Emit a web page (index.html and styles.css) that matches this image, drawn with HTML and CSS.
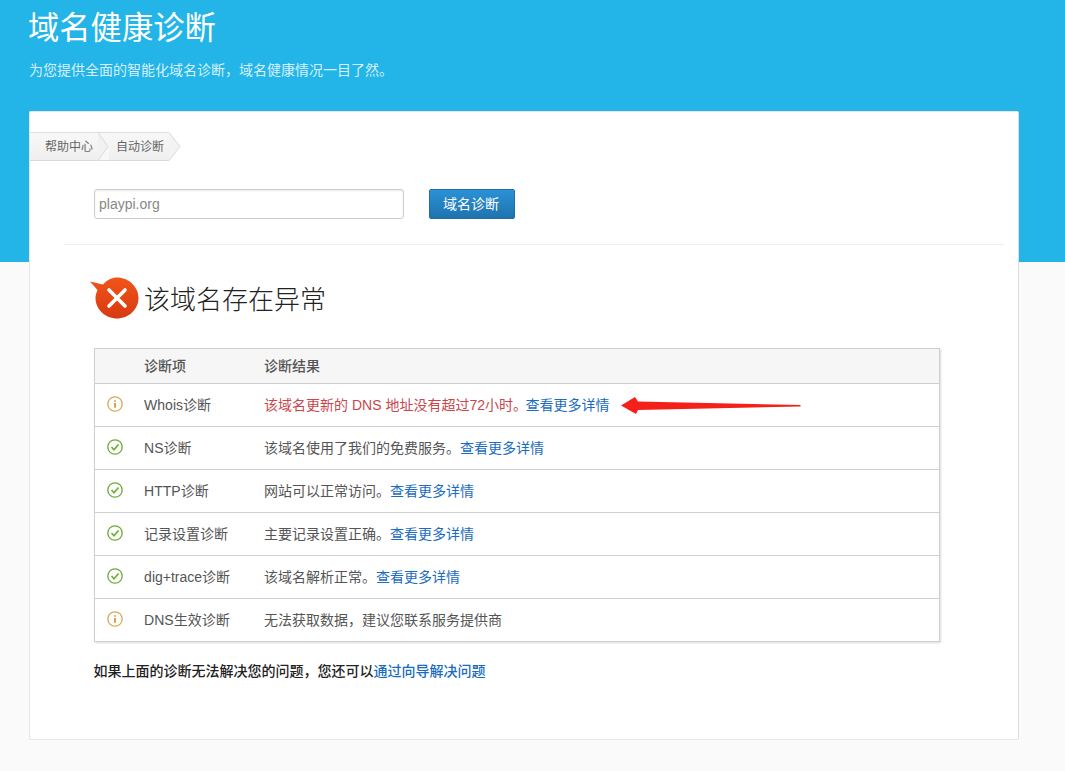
FILE: index.html
```html
<!DOCTYPE html>
<html lang="zh-CN">
<head>
<meta charset="utf-8">
<title>域名健康诊断</title>
<link rel="stylesheet" href="styles.css">
</head>
<body>
<header class="hero">
  <h1 class="hero-title">域名健康诊断</h1>
  <p class="hero-sub">为您提供全面的智能化域名诊断，域名健康情况一目了然。</p>
</header>
<main class="card">
  <nav class="crumbs">
    <span class="crumb crumb-first">帮助中心</span>
    <svg class="crumb-tip" width="11" height="29" viewBox="0 0 11 29"><rect y=".5" width="11" height="28" fill="#f7f7f7"/><path d="M0 .5L10 14.500 0 28.500Z" fill="#f1f1f1"/><path d="M0 .5H11M0 28.500H11" stroke="#dcdcdc"/><path d="M0 .5L10 14.500 0 28.500" fill="none" stroke="#d9d9d9"/></svg>
    <span class="crumb crumb-second">自动诊断</span>
    <svg class="crumb-tip" width="12" height="29" viewBox="0 0 12 29"><path d="M0 .5L11 14.500 0 28.500Z" fill="#f3f3f3"/><path d="M0 .5L11 14.500 0 28.500" fill="none" stroke="#d9d9d9"/></svg>
  </nav>
  <form class="search">
    <input class="search-input" type="text" value="playpi.org">
    <button class="search-btn" type="button">域名诊断</button>
  </form>
  <hr class="divider">
  <div class="status">
    <svg class="status-icon" width="50" height="44" viewBox="0 0 50 44">
      <defs><linearGradient id="sg" x1="0" y1="0" x2="0" y2="1"><stop offset="0" stop-color="#f2551a"/><stop offset="1" stop-color="#d63a10"/></linearGradient></defs>
      <path d="M0 4.500L13 7.500C17 3 22 .5 27 .5 38.500.5 48.500 9.500 48.500 21S38.500 41.500 27 41.500 5.500 32.500 5.500 21C5.500 18 6.500 15.500 7.500 13Z" fill="url(#sg)"/>
      <path d="M19 13L35 29M35 13L19 29" stroke="#fff" stroke-width="3.600" stroke-linecap="round"/>
    </svg>
    <h2 class="status-title">该域名存在异常</h2>
  </div>
  <table class="results">
    <thead>
      <tr><th class="col-icon"></th><th class="col-item">诊断项</th><th>诊断结果</th></tr>
    </thead>
    <tbody>
      <tr>
        <td><svg class="mark mark-info" width="16" height="16" viewBox="0 0 16 16"><circle cx="8" cy="8" r="7.200"/><path d="M8 4.200v1.600M8 7v4.800"/></svg></td>
        <td>Whois诊断</td>
        <td class="cell-arrow"><span class="err">该域名更新的 DNS 地址没有超过72小时。</span><a href="#">查看更多详情</a>
          <svg class="arrow" width="180" height="18" viewBox="0 0 180 18"><path d="M0 8.500L14 0 17 4.500 179.500 8 179.500 9.500 17 13 15 17Z" fill="#f5201a"/></svg></td>
      </tr>
      <tr>
        <td><svg class="mark mark-ok" width="16" height="16" viewBox="0 0 16 16"><circle cx="8" cy="8" r="7.200"/><path d="M4.500 8l2.500 2.800 4.500-5.300"/></svg></td>
        <td>NS诊断</td>
        <td>该域名使用了我们的免费服务。<a href="#">查看更多详情</a></td>
      </tr>
      <tr>
        <td><svg class="mark mark-ok" width="16" height="16" viewBox="0 0 16 16"><circle cx="8" cy="8" r="7.200"/><path d="M4.500 8l2.500 2.800 4.500-5.300"/></svg></td>
        <td>HTTP诊断</td>
        <td>网站可以正常访问。<a href="#">查看更多详情</a></td>
      </tr>
      <tr>
        <td><svg class="mark mark-ok" width="16" height="16" viewBox="0 0 16 16"><circle cx="8" cy="8" r="7.200"/><path d="M4.500 8l2.500 2.800 4.500-5.300"/></svg></td>
        <td>记录设置诊断</td>
        <td>主要记录设置正确。<a href="#">查看更多详情</a></td>
      </tr>
      <tr>
        <td><svg class="mark mark-ok" width="16" height="16" viewBox="0 0 16 16"><circle cx="8" cy="8" r="7.200"/><path d="M4.500 8l2.500 2.800 4.500-5.300"/></svg></td>
        <td>dig+trace诊断</td>
        <td>该域名解析正常。<a href="#">查看更多详情</a></td>
      </tr>
      <tr>
        <td><svg class="mark mark-info" width="16" height="16" viewBox="0 0 16 16"><circle cx="8" cy="8" r="7.200"/><path d="M8 4.200v1.600M8 7v4.800"/></svg></td>
        <td>DNS生效诊断</td>
        <td>无法获取数据，建议您联系服务提供商</td>
      </tr>
    </tbody>
  </table>
  <p class="help">如果上面的诊断无法解决您的问题，您还可以<a href="#">通过向导解决问题</a></p>
</main>
</body>
</html>
```
FILE: styles.css
```css
* { box-sizing: border-box; }
html, body { margin: 0; padding: 0; }
body {
  background: #fafafa;
  color: #555;
  font-family: "Liberation Sans", "Noto Sans CJK SC", sans-serif;
  font-size: 14px;
  height: 771px;
  overflow: hidden;
}
a { color: #1a6cc0; text-decoration: none; }

.hero {
  height: 262px;
  background: #23b4e8;
  padding: 8px 0 0 28px;
  color: #fff;
}
.hero-title {
  margin: 0;
  font-size: 31.300px;
  line-height: 42px;
  font-weight: 400;
}
.hero-sub {
  margin: 10px 0 0 1px;
  font-size: 14px;
  line-height: 20px;
  color: #d6f1fb;
}

.card {
  width: 990px;
  height: 629px;
  margin: -151px 0 0 29px;
  background: #fff;
  border: 1px solid #e6e6e6;
  border-right-color: #dcdcdc;
  border-radius: 2px;
  padding-top: 20px;
}

.crumbs { display: flex; height: 29px; }
.crumb {
  display: block;
  height: 29px;
  line-height: 29px;
  font-size: 12px;
  color: #666;
  background: linear-gradient(#f8f8f8, #efefef);
  border-top: 1px solid #dedede;
  border-bottom: 1px solid #d9d9d9;
}
.crumb-first { width: 68px; padding-left: 15px; }
.crumb-second { width: 60px; padding-left: 7px; }
.crumb-tip { display: block; flex: none; }

.search {
  display: flex;
  gap: 25px;
  margin: 28px 0 0 64px;
}
.search-input {
  width: 310px;
  height: 30px;
  padding: 0 4px 1px;
  border: 1px solid #ccc;
  border-radius: 3px;
  box-shadow: inset 0 1px 2px rgba(0, 0, 0, .08);
  font: 14px "Liberation Sans", "Noto Sans CJK SC", sans-serif;
  color: #888;
}
.search-btn {
  width: 86px;
  height: 30px;
  padding: 0 2px 2px 0;
  border: 1px solid #1f6ea6;
  border-radius: 2px;
  background: linear-gradient(#2a92d6, #1f73ae);
  color: #fff;
  font: 14px "Liberation Sans", "Noto Sans CJK SC", sans-serif;
}

.divider {
  width: 940px;
  height: 1px;
  margin: 25px 0 0 34px;
  border: 0;
  background: #eee;
}

.status {
  display: flex;
  align-items: center;
  gap: 4px;
  margin: 32px 0 0 60px;
  height: 44px;
}
.status-icon { display: block; flex: none; }
.status-title {
  margin: 0;
  padding-top: 1px;
  font-size: 26px;
  line-height: 44px;
  font-weight: 300;
  color: #222;
}

.results {
  width: 846px;
  margin: 27px 0 0 64px;
  border: 1px solid #cfcfcf;
  border-collapse: collapse;
  box-shadow: 1px 1px 2px rgba(0, 0, 0, .15);
}
.results th, .results td {
  padding: 0 0 2px 10px;
  height: 43px;
  text-align: left;
  font-size: 14px;
  border-top: 1px solid #cfcfcf;
  vertical-align: middle;
}
.results th {
  height: 35px;
  background: #f6f6f6;
  font-weight: 500;
  color: #555;
  border-top: 0;
}
.results .col-icon { width: 40px; }
.results .col-item { width: 119px; }
.results th:nth-child(2), .results td:nth-child(2) { padding-left: 9.600px; }
.results th:nth-child(3), .results td:nth-child(3) { padding-left: 10.600px; }
.results td:first-child { padding-left: 12px; }
.cell-arrow { position: relative; }
.err { color: #c9464b; margin-right: -1.500px; }
.arrow { position: absolute; left: 367px; top: 13px; }

.mark { display: block; fill: none; stroke-width: 1.300; }
.mark-info { stroke: #d9a951; }
.mark-info path { stroke: #d18a2e; stroke-width: 1.600; }
.mark-ok { stroke: #6aac35; }
.mark-ok path { stroke-width: 1.600; }

.help {
  margin: 19px 0 0 63.600px;
  font-size: 14px;
  line-height: 20px;
  font-weight: 500;
  color: #222;
}
```
